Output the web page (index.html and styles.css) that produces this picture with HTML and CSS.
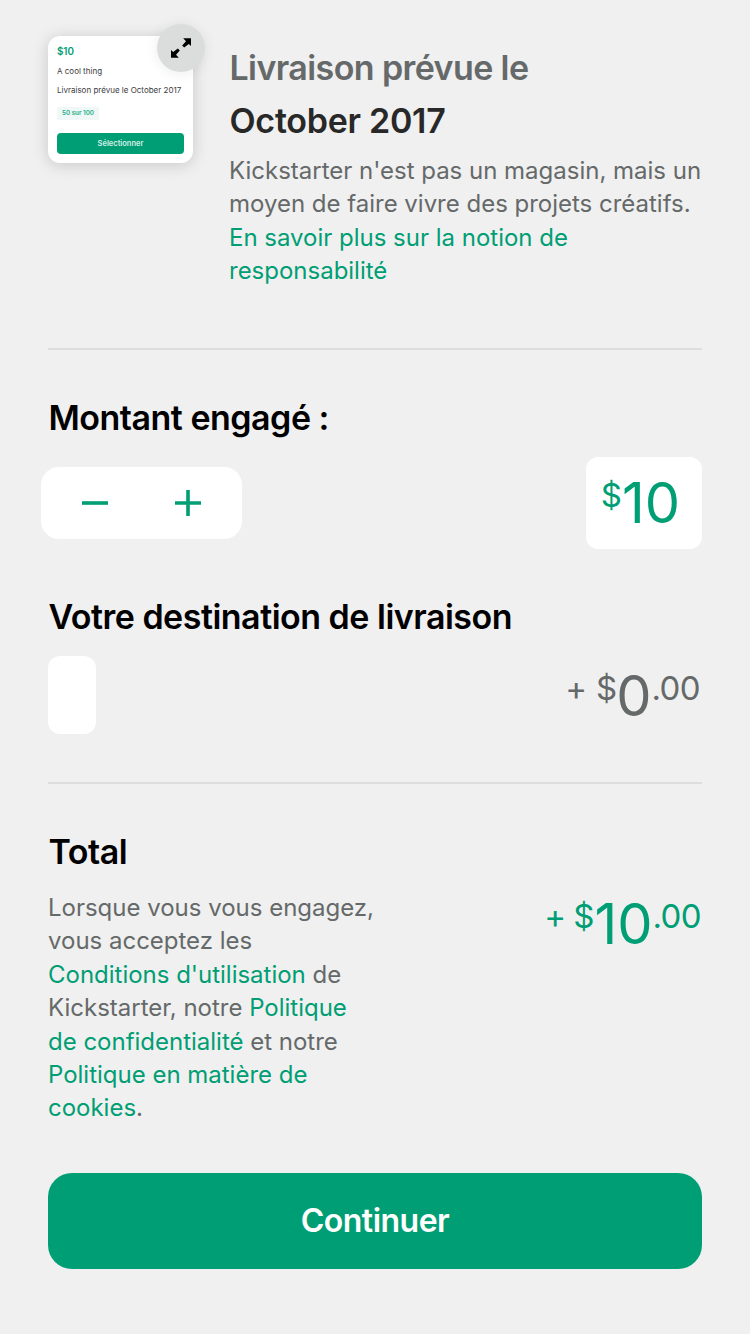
FILE: index.html
```html
<!DOCTYPE html>
<html lang="fr">
<head>
<meta charset="utf-8">
<title>Engagement</title>
<link rel="stylesheet" href="styles.css">
</head>
<body>
<main class="pledge">
  <section class="summary">
    <div class="thumb">
      <div class="thumb-price">$10</div>
      <div class="thumb-title">A cool thing</div>
      <div class="thumb-date">Livraison prévue le October 2017</div>
      <div class="thumb-stock">50 sur 100</div>
      <div class="thumb-button">Sélectionner</div>
      <div class="expand">
        <svg width="22" height="22" viewBox="0 0 22 22">
          <path d="M13.2 1.2H21V9L18.8 6.9L14.2 10.6L12.2 8.6L16 4.2ZM8.8 20.8H1V13L3.2 15.1L7.8 11.4L9.8 13.4L6 17.8Z"/>
        </svg>
      </div>
    </div>
    <div class="delivery">
      <h2 class="heading heading-muted">Livraison prévue le</h2>
      <h2 class="heading heading-date">October 2017</h2>
      <p class="copy">Kickstarter n'est pas un magasin, mais un<br>moyen de faire vivre des projets créatifs.<br><a class="link">En savoir plus sur la notion de<br>responsabilité</a></p>
    </div>
  </section>
  <section class="amounts">
    <h2 class="heading">Montant engagé :</h2>
    <div class="amount-row">
      <div class="stepper">
        <svg width="28" height="28" viewBox="0 0 28 28"><path d="M1 14H27"/></svg>
        <svg width="28" height="28" viewBox="0 0 28 28"><path d="M1 14H27M14 1V27"/></svg>
      </div>
      <div class="amount-box"><div class="price"><span class="small dollar">$</span><span class="big one">1</span><span class="big">0</span></div></div>
    </div>
    <h2 class="heading shipping-heading">Votre destination de livraison</h2>
    <div class="shipping-row">
      <div class="country"></div>
      <div class="price price-muted"><span class="small plus">+</span><span class="small dollar-tight">$</span><span class="big">0</span><span class="small cents">.00</span></div>
    </div>
  </section>
  <section class="total">
    <div class="terms">
      <h2 class="heading">Total</h2>
      <p class="copy">Lorsque vous vous engagez,<br>vous acceptez les<br><a class="link">Conditions d'utilisation</a> de<br>Kickstarter, notre <a class="link">Politique<br>de confidentialité</a> et notre<br><a class="link">Politique en matière de<br>cookies</a>.</p>
    </div>
    <div class="price"><span class="small plus">+</span><span class="small dollar">$</span><span class="big one">1</span><span class="big">0</span><span class="small cents">.00</span></div>
  </section>
  <button class="continue">Continuer</button>
</main>
</body>
</html>
```
FILE: styles.css
```css
* { box-sizing: border-box; }
body {
  margin: 0;
  background: #f0f0f0;
  font-family: Inter, "Liberation Sans", sans-serif;
  color: #000;
}
.pledge { width: 750px; height: 1334px; padding: 36px 48px 0; overflow: hidden; }

.summary {
  display: flex;
  align-items: flex-start;
  gap: 36px;
  height: 314px;
  border-bottom: 2px solid #dcdedd;
}
.thumb {
  position: relative;
  display: flex;
  flex-direction: column;
  align-items: flex-start;
  width: 145px;
  height: 127px;
  padding: 10px 9px 0;
  border-radius: 12px;
  background: #fff;
  box-shadow: 0 2px 16px rgba(0, 0, 0, .17);
  color: #3c3c3c;
  font-size: 8px;
  white-space: nowrap;
}
.thumb-price { color: #009e74; font-size: 9.8px; font-weight: 600; line-height: 12px; }
.thumb-title { margin-top: 7px; line-height: 12px; }
.thumb-date { margin-top: 7px; line-height: 12px; }
.thumb-stock {
  width: 42px;
  margin-top: 11px;
  border-radius: 2px;
  background: #eff8f6;
  color: #1fae88;
  font-size: 6.3px;
  font-weight: 600;
  line-height: 13px;
  text-align: center;
}
.thumb-button {
  width: 127px;
  margin-top: 13px;
  border-radius: 4px;
  background: #009e74;
  color: #d8f0e9;
  font-size: 7.5px;
  font-weight: 600;
  line-height: 21px;
  text-align: center;
}
.expand {
  position: absolute;
  top: -12px;
  right: -12px;
  display: grid;
  place-items: center;
  width: 48px;
  height: 48px;
  border-radius: 50%;
  background: #dbdddc;
  box-shadow: 0 1px 14px rgba(0, 0, 0, .08);
}

.delivery { padding-top: 12px; }
.heading {
  margin: 0;
  padding-left: .5px;
  font-size: 34px;
  font-weight: 600;
  letter-spacing: -.5px;
  line-height: 40px;
  white-space: nowrap;
}
.heading-muted { color: #656969; letter-spacing: -.6px; }
.heading-date { margin-top: 13px; color: #282828; letter-spacing: -.27px; }
.copy {
  margin: 12.8px 0 0;
  color: #656969;
  font-size: 24px;
  letter-spacing: -.01px;
  line-height: 33.4px;
  white-space: nowrap;
}
.link { color: #009e74; }

.amounts { height: 434px; padding-top: 48px; border-bottom: 2px solid #dcdedd; }
.amount-row { display: flex; justify-content: space-between; align-items: center; height: 92px; margin: 19px 0 0 -7px; }
.stepper {
  display: flex;
  align-items: center;
  gap: 65px;
  width: 201px;
  height: 72px;
  padding-left: 40px;
  border-radius: 18px;
  background: #fff;
}
.stepper path { stroke: #009e74; stroke-width: 3.6; }
.amount-box { display: flex; justify-content: flex-end; width: 116px; height: 92px; padding: 16px 22px 0 0; border-radius: 12px; background: #fff; }
.shipping-heading { margin-top: 48px; }
.shipping-row { display: flex; justify-content: space-between; margin-top: 19px; }
.country { width: 48px; height: 78px; border-radius: 12px; background: #fff; }

.price { display: flex; align-items: flex-start; color: #009e74; line-height: 60px; }
.price-muted { padding-top: 10px; color: #656969; }
.small { font-size: 33px; line-height: 44px; }
.big { font-size: 56px; }
.one { margin-left: -1px; }
.plus { margin-right: 7px; }
.dollar { margin-right: 1px; }
.dollar-tight { margin-left: 2px; margin-right: -1px; }
.cents { margin-right: 2px; letter-spacing: -.6px; }

.total { display: flex; justify-content: space-between; height: 389px; padding-top: 48px; }
.terms .copy { margin-top: 19px; }
.total .price { padding-top: 62px; }
.total .cents { margin-right: 1px; }

.continue {
  display: block;
  width: 654px;
  height: 96px;
  padding: 0 0 1px;
  border: 0;
  border-radius: 24px;
  background: #009e74;
  color: #fff;
  font-family: inherit;
  font-size: 32px;
  font-weight: 600;
  letter-spacing: -.5px;
}
```
